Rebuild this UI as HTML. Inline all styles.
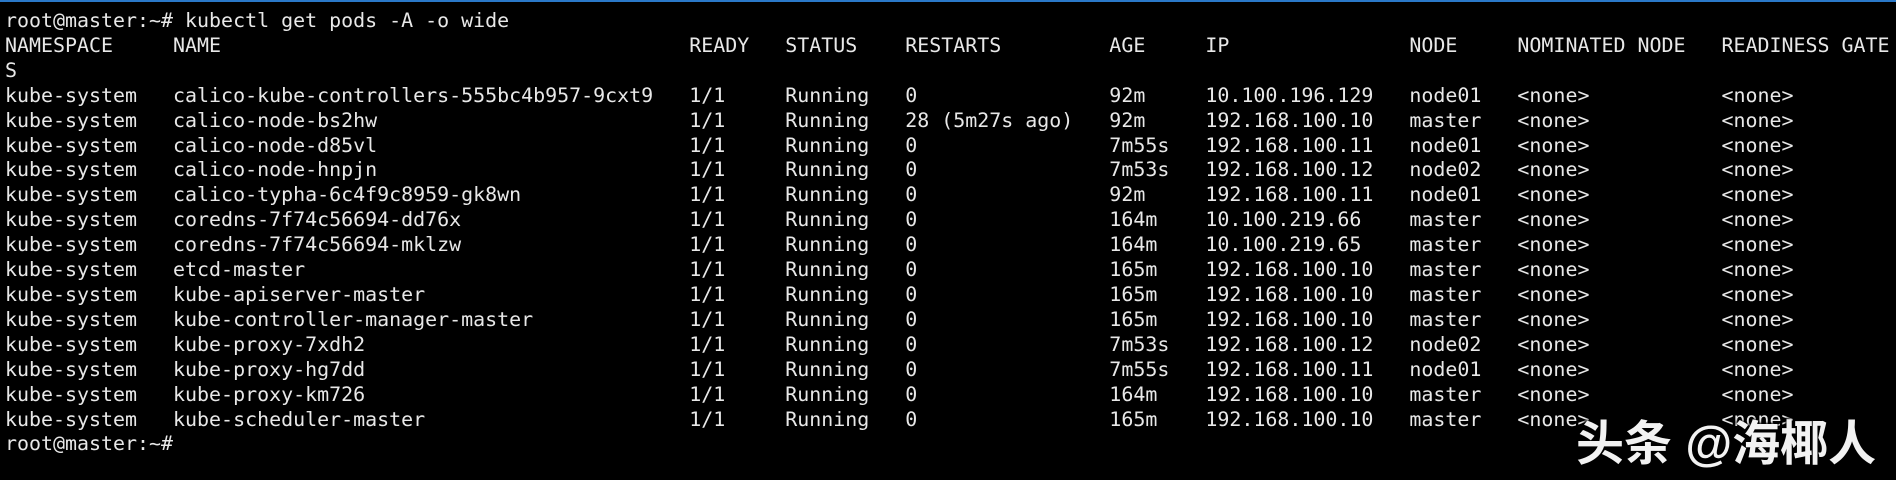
<!DOCTYPE html>
<html><head><meta charset="utf-8"><style>
html,body{margin:0;padding:0;background:#000;width:1896px;height:480px;overflow:hidden;position:relative}
.top{position:absolute;left:0;top:0;width:1896px;height:2px;background:#2a78c8}
pre{position:absolute;left:5px;top:8px;margin:0;font-family:"DejaVu Sans Mono","Liberation Mono",monospace;font-size:19.95px;line-height:24.9px;color:#e8e8e8;white-space:pre}
.wm{position:absolute;left:1576px;top:404px;font-family:"Liberation Sans","Noto Sans CJK SC",sans-serif;font-size:48px;font-weight:bold;color:#f2f2f2;white-space:nowrap;text-shadow:1px 1px 2px #000,-1px -1px 2px #000}
</style></head><body><div class="top"></div><pre>root@master:~# kubectl get pods -A -o wide
NAMESPACE     NAME                                       READY   STATUS    RESTARTS         AGE     IP               NODE     NOMINATED NODE   READINESS GATE
S
kube-system   calico-kube-controllers-555bc4b957-9cxt9   1/1     Running   0                92m     10.100.196.129   node01   &lt;none&gt;           &lt;none&gt;
kube-system   calico-node-bs2hw                          1/1     Running   28 (5m27s ago)   92m     192.168.100.10   master   &lt;none&gt;           &lt;none&gt;
kube-system   calico-node-d85vl                          1/1     Running   0                7m55s   192.168.100.11   node01   &lt;none&gt;           &lt;none&gt;
kube-system   calico-node-hnpjn                          1/1     Running   0                7m53s   192.168.100.12   node02   &lt;none&gt;           &lt;none&gt;
kube-system   calico-typha-6c4f9c8959-gk8wn              1/1     Running   0                92m     192.168.100.11   node01   &lt;none&gt;           &lt;none&gt;
kube-system   coredns-7f74c56694-dd76x                   1/1     Running   0                164m    10.100.219.66    master   &lt;none&gt;           &lt;none&gt;
kube-system   coredns-7f74c56694-mklzw                   1/1     Running   0                164m    10.100.219.65    master   &lt;none&gt;           &lt;none&gt;
kube-system   etcd-master                                1/1     Running   0                165m    192.168.100.10   master   &lt;none&gt;           &lt;none&gt;
kube-system   kube-apiserver-master                      1/1     Running   0                165m    192.168.100.10   master   &lt;none&gt;           &lt;none&gt;
kube-system   kube-controller-manager-master             1/1     Running   0                165m    192.168.100.10   master   &lt;none&gt;           &lt;none&gt;
kube-system   kube-proxy-7xdh2                           1/1     Running   0                7m53s   192.168.100.12   node02   &lt;none&gt;           &lt;none&gt;
kube-system   kube-proxy-hg7dd                           1/1     Running   0                7m55s   192.168.100.11   node01   &lt;none&gt;           &lt;none&gt;
kube-system   kube-proxy-km726                           1/1     Running   0                164m    192.168.100.10   master   &lt;none&gt;           &lt;none&gt;
kube-system   kube-scheduler-master                      1/1     Running   0                165m    192.168.100.10   master   &lt;none&gt;           &lt;none&gt;
root@master:~#</pre>
<div class="wm">头条 @海椰人</div>
</body></html>
